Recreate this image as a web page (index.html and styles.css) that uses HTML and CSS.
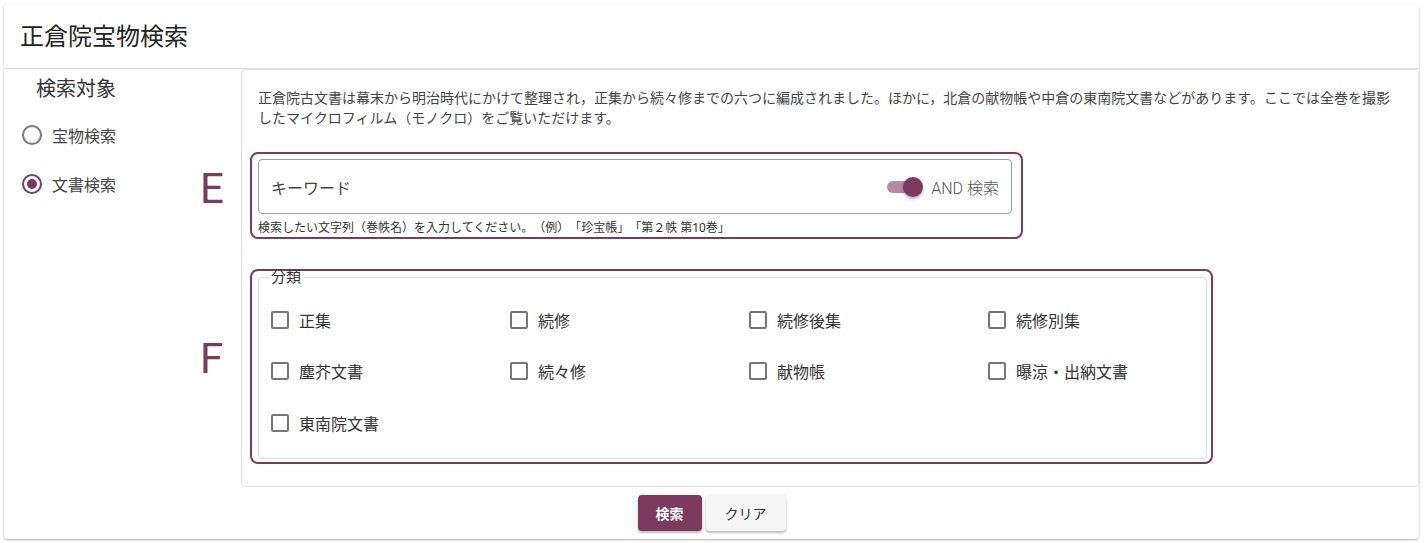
FILE: index.html
```html
<!DOCTYPE html>
<html lang="ja">
<head>
    <meta charset="UTF-8">
    <meta name="viewport" content="width=device-width, initial-scale=1.0">
    <title>正倉院宝物検索</title>
    <link rel="stylesheet" href="styles.css">
</head>
<body>

<div class="card">
    <div class="header">正倉院宝物検索</div>

    <div class="content">
        <div class="sidebar">
            <div class="sideTitle">検索対象</div>
            <label class="radioRow">
                <span class="radio"></span>
                <span>宝物検索</span>
            </label>
            <label class="radioRow">
                <span class="radio checked"></span>
                <span>文書検索</span>
            </label>
            <span class="mark markE">E</span>
            <span class="mark markF">F</span>
        </div>

        <div class="main">
            <p class="intro">正倉院古文書は幕末から明治時代にかけて整理され，正集から続々修までの六つに編成されました。ほかに，北倉の献物帳や中倉の東南院文書などがあります。ここでは全巻を撮影したマイクロフィルム（モノクロ）をご覧いただけます。</p>

            <div class="highlight keywordBox">
                <div class="textField">
                    <span class="placeholder">キーワード</span>
                    <span class="switch">
                        <span class="track"></span>
                        <span class="thumb"></span>
                    </span>
                    <span class="switchLabel">AND 検索</span>
                </div>
                <div class="hint">検索したい文字列（巻帙名）を入力してください。（例）「珍宝帳」「第２帙 第10巻」</div>
            </div>

            <div class="highlight categoryBox">
                <fieldset class="category">
                    <legend>分類</legend>
                    <div class="checkGrid">
                        <label class="checkRow"><span class="box"></span>正集</label>
                        <label class="checkRow"><span class="box"></span>続修</label>
                        <label class="checkRow"><span class="box"></span>続修後集</label>
                        <label class="checkRow"><span class="box"></span>続修別集</label>
                        <label class="checkRow"><span class="box"></span>塵芥文書</label>
                        <label class="checkRow"><span class="box"></span>続々修</label>
                        <label class="checkRow"><span class="box"></span>献物帳</label>
                        <label class="checkRow"><span class="box"></span>曝涼・出納文書</label>
                        <label class="checkRow"><span class="box"></span>東南院文書</label>
                    </div>
                </fieldset>
            </div>
        </div>
    </div>

    <div class="actions">
        <button class="btn primary">検索</button>
        <button class="btn">クリア</button>
    </div>
</div>

</body>
</html>
```

FILE: styles.css
```css
* {
    box-sizing: border-box;
}
body {
    margin: 0;
    padding: 4px;
    font-family: Roboto, "Noto Sans CJK JP", sans-serif;
    color: #333;
    background: #fff;
    text-spacing-trim: space-all;
}
.card {
    width: 1415px;
    border-radius: 4px;
    box-shadow: 0 1px 3px rgba(0, 0, 0, 0.2), 0 1px 1px rgba(0, 0, 0, 0.12);
    background: #fff;
}
.header {
    height: 65px;
    padding: 0 16px 3px;
    display: flex;
    align-items: center;
    font-size: 24px;
    color: #222;
    border-bottom: 1px solid #e0e0e0;
}
.content {
    display: flex;
}
.sidebar {
    position: relative;
    width: 237px;
    flex-shrink: 0;
}
.sideTitle {
    font-size: 20px;
    padding: 5px 0 0 32px;
    height: 41px;
    line-height: 30px;
    color: #333;
}
.radioRow {
    display: flex;
    align-items: center;
    gap: 10px;
    height: 49px;
    padding-left: 18px;
    font-size: 16px;
    color: #444;
}
.radio {
    width: 20px;
    height: 20px;
    border: 2px solid #777;
    border-radius: 50%;
    display: flex;
    align-items: center;
    justify-content: center;
}
.radio.checked {
    border-color: #7b3a5e;
}
.radio.checked::after {
    content: "";
    width: 10px;
    height: 10px;
    border-radius: 50%;
    background: #7b3a5e;
}
.mark {
    position: absolute;
    left: 196px;
    font-size: 42px;
    line-height: 1;
    color: #7b3a5e;
}
.markE {
    top: 99px;
}
.markF {
    top: 269px;
}
.main {
    flex: 1;
    border: 1px solid #e0e0e0;
    border-radius: 4px;
    padding: 18px 16px 22px;
}
.intro {
    margin: 0 0 24px;
    font-size: 14px;
    line-height: 20px;
    color: #444;
}
.highlight {
    border: 2px solid #7b3a5e;
    border-radius: 8px;
    margin-left: -8px;
}
.keywordBox {
    width: 773px;
    padding: 5px 9px 1px 6px;
}
.textField {
    height: 55px;
    border: 1px solid #9e9e9e;
    border-radius: 4px;
    display: flex;
    align-items: center;
    padding: 0 12px;
    font-size: 16px;
}
.placeholder {
    flex: 1;
    color: #444;
}
.switch {
    position: relative;
    width: 36px;
    height: 20px;
    margin-right: 8px;
}
.track {
    position: absolute;
    left: 0;
    top: 4px;
    width: 34px;
    height: 12px;
    border-radius: 6px;
    background: #b88aa2;
}
.thumb {
    position: absolute;
    right: 0;
    top: 0;
    width: 20px;
    height: 20px;
    border-radius: 50%;
    background: #7b3a5e;
    box-shadow: 0 2px 3px rgba(0, 0, 0, 0.3);
}
.switchLabel {
    font-size: 16px;
    font-weight: 300;
    color: #555;
}
.hint {
    font-size: 12px;
    line-height: 16px;
    margin-top: 6px;
    color: #333;
}
.categoryBox {
    width: 963px;
    margin-top: 30px;
    padding: 0 4px 3px 6px;
}
.category {
    margin: -2px 0 0;
    min-width: 0;
    border: 1px solid #ddd;
    border-radius: 4px;
    padding: 9px 12px 9px;
}
.category legend {
    font-size: 15px;
    line-height: 16px;
    padding: 0 3px;
    margin-left: -3px;
    color: #333;
}
.checkGrid {
    display: grid;
    grid-template-columns: 239px 239px 239px 1fr;
    grid-auto-rows: 51.5px;
}
.checkRow {
    display: flex;
    align-items: center;
    gap: 10px;
    font-size: 16px;
    color: #333;
}
.box {
    width: 18px;
    height: 18px;
    border: 2px solid #777;
    border-radius: 2px;
}
.actions {
    display: flex;
    justify-content: center;
    gap: 4px;
    padding: 8px 0;
}
.btn {
    height: 36px;
    min-width: 64px;
    padding: 0 19px;
    border: none;
    border-radius: 4px;
    font-family: inherit;
    font-size: 14px;
    color: #333;
    background: #f5f5f5;
    box-shadow: 0 2px 2px rgba(0, 0, 0, 0.2), 0 1px 4px rgba(0, 0, 0, 0.1);
}
.btn.primary {
    padding: 0 16px;
    background: #7b3a5e;
    color: #fff;
    font-weight: bold;
}
```
